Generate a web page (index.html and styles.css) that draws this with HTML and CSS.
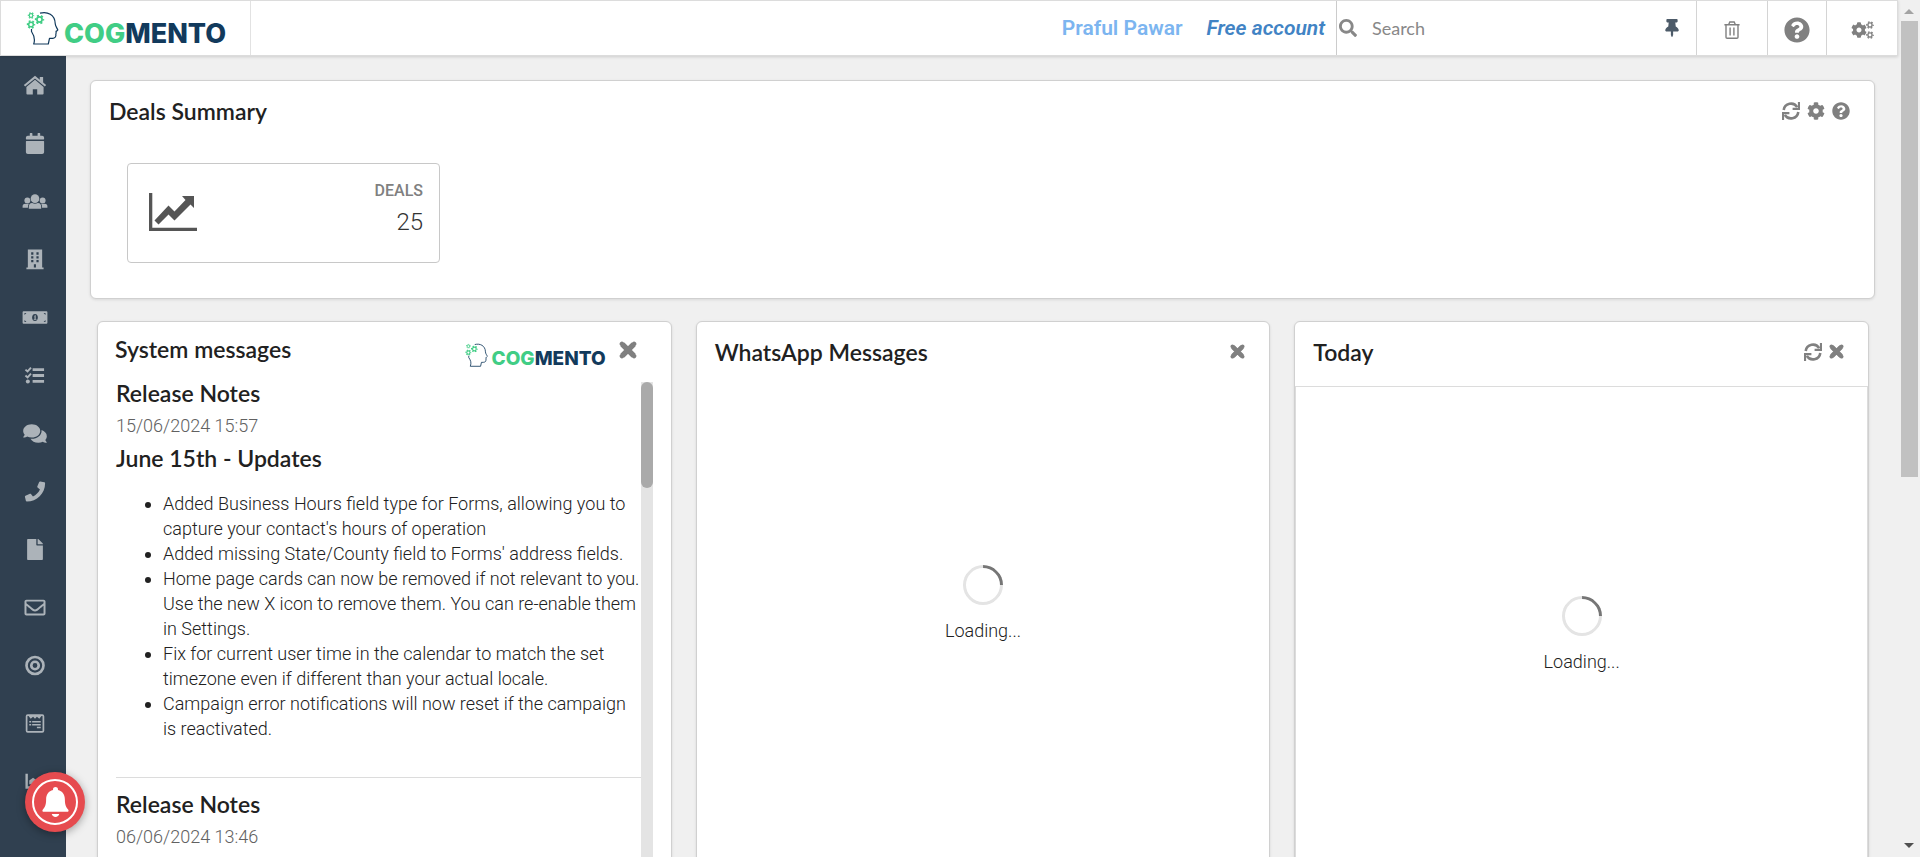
FILE: index.html
```html
<!DOCTYPE html>
<html lang="en">
<head>
<meta charset="utf-8">
<title>Cogmento CRM</title>
<link rel="stylesheet" href="styles.css">
</head>
<body>
<svg class="defs" aria-hidden="true">
  <symbol id="cog" viewBox="0 0 512 512"><path fill-rule="evenodd" d="M487.4 315.7l-42.6-24.6c4.3-23.2 4.3-47 0-70.2l42.6-24.6c4.9-2.8 7.1-8.6 5.5-14-11.1-35.6-30-67.8-54.7-94.6-3.8-4.1-10-5.1-14.8-2.3L380.8 110c-17.9-15.4-38.5-27.3-60.8-35.1V25.8c0-5.6-3.9-10.5-9.4-11.7-36.7-8.2-74.3-7.8-109.2 0-5.5 1.2-9.4 6.1-9.4 11.7V75c-22.2 7.9-42.8 19.8-60.8 35.1L88.7 85.5c-4.9-2.8-11-1.9-14.8 2.3-24.7 26.7-43.6 58.9-54.7 94.6-1.7 5.4.6 11.2 5.5 14L67.3 221c-4.3 23.2-4.3 47 0 70.2l-42.6 24.6c-4.9 2.8-7.1 8.6-5.5 14 11.1 35.6 30 67.8 54.7 94.6 3.8 4.1 10 5.1 14.8 2.3l42.6-24.6c17.9 15.4 38.5 27.3 60.8 35.1v49.2c0 5.6 3.9 10.5 9.4 11.7 36.7 8.2 74.3 7.8 109.2 0 5.5-1.2 9.4-6.1 9.4-11.7v-49.2c22.2-7.9 42.8-19.8 60.8-35.1l42.6 24.6c4.9 2.8 11 1.9 14.8-2.3 24.7-26.7 43.6-58.9 54.7-94.6 1.5-5.5-.7-11.3-5.6-14.1zM256 336c-44.1 0-80-35.9-80-80s35.9-80 80-80 80 35.9 80 80-35.9 80-80 80z"/></symbol>
  <symbol id="gear-ring" viewBox="0 0 20 20"><circle cx="10" cy="10" r="5.2" fill="none" stroke="currentColor" stroke-width="3.4"/><circle cx="10" cy="10" r="8" fill="none" stroke="currentColor" stroke-width="3.4" stroke-dasharray="4.2 4.18" stroke-dashoffset="2.1"/></symbol>
  <symbol id="question" viewBox="0 0 512 512"><path d="M504 256c0 136.997-111.043 248-248 248S8 392.997 8 256C8 119.083 119.043 8 256 8s248 111.083 248 248zM262.655 90c-54.497 0-89.255 22.957-116.549 63.758-3.536 5.286-2.353 12.415 2.715 16.258l34.699 26.31c5.205 3.947 12.621 3.008 16.665-2.122 17.864-22.658 30.113-35.797 57.303-35.797 20.429 0 45.698 13.148 45.698 32.958 0 14.976-12.363 22.667-32.534 33.976C247.128 238.528 216 254.941 216 296v4c0 6.627 5.373 12 12 12h56c6.627 0 12-5.373 12-12v-1.333c0-28.462 83.186-29.647 83.186-106.667 0-58.002-60.165-102-116.531-102zM256 338c-25.365 0-46 20.635-46 46 0 25.364 20.635 46 46 46s46-20.636 46-46c0-25.364-20.635-46-46-46z"/></symbol>
  <symbol id="refresh" viewBox="0 0 18 18"><g fill="none" stroke="currentColor" stroke-width="2.6"><path d="M1.7 8A7.3 7.3 0 0 1 15.2 5.2"/><path d="M16.3 10A7.3 7.3 0 0 1 2.8 12.8"/><path d="M17 0V6.9H10.6M1 18V11.1H7.4" stroke-width="2.2"/></g></symbol>
  <symbol id="times" viewBox="0 0 16 16"><path d="M3 3L13 13M13 3L3 13" stroke="currentColor" stroke-width="5" stroke-linecap="butt"/><path d="M2.6 2.6L13.4 13.4M13.4 2.6L2.6 13.4" stroke="currentColor" stroke-width="4" stroke-linecap="round"/></symbol>
  <symbol id="head" viewBox="0 0 32 34">
    <g fill="none" stroke="#123a5c" stroke-width="1.2" stroke-linejoin="round"><path d="M13.5 2.2C21 .2 28.400 3.700 28.700 12.500C28.600 15 30.800 17.200 31.300 19C31.200 20 29.400 19.700 29.500 20.800C30 22 29 23 29.400 24.500C29.300 27 27 27.600 23 27.400L21.800 33H7.200C9 28 8 25 5 20.500V18"/></g>
    <g color="#41cd85"><use href="#gear-ring" x="1" y="1" width="7" height="7"/><use href="#gear-ring" x="8" y="3.500" width="10" height="10"/><use href="#gear-ring" x="0" y="9" width="9" height="9"/></g>
  </symbol>
</svg>

<header class="topbar">
  <a class="brand" href="#"><svg class="brand-head"><use href="#head"/></svg><span class="brand-name">COG<b>MENTO</b></span></a>
  <div class="account"><span class="user">Praful Pawar</span><a class="plan" href="#">Free account</a></div>
  <div class="search">
    <svg class="i18" viewBox="0 0 512 512"><path d="M505 442.7L405.3 343c-4.500-4.500-10.600-7-17-7H372c27.600-35.300 44-79.700 44-128C416 93.100 322.900 0 208 0S0 93.100 0 208s93.100 208 208 208c48.300 0 92.700-16.400 128-44v16.300c0 6.400 2.500 12.500 7 17l99.700 99.700c9.400 9.400 24.600 9.400 33.900 0l28.300-28.300c9.400-9.400 9.400-24.600.1-34zM208 336c-70.700 0-128-57.200-128-128 0-70.700 57.200-128 128-128 70.700 0 128 57.200 128 128 0 70.700-57.200 128-128 128z"/></svg>
    <input type="text" placeholder="Search" aria-label="Search">
    <button class="pin" aria-label="Pin"><svg viewBox="0 0 384 512"><path d="M298 214L286 96H328c13 0 24-11 24-24V24c0-13-11-24-24-24H56C43 0 32 11 32 24v48c0 13 11 24 24 24h42L86 214C37 237 0 277 0 328c0 13 11 24 24 24h136v104l24 56h16l24-56V352h136c13 0 24-11 24-24 0-51-38-91-86-114z"/></svg></button>
  </div>
  <button class="tool trash" aria-label="Trash"><svg viewBox="0 0 16 18"><g fill="none" stroke="currentColor" stroke-width="1.400"><path d="M.4 3.700H15.600M4.700 3.500L5.800 1H10.200L11.300 3.500M2 4V16.200Q2 17.300 3.100 17.300H12.900Q14 17.300 14 16.200V4M6.100 6.500V14.500M9.900 6.500V14.500"/></g></svg></button>
  <button class="tool help" aria-label="Help"><svg><use href="#question"/></svg></button>
  <button class="tool settings" aria-label="Settings"><svg viewBox="0 0 23 18"><use href="#cog" x="0" y="1" width="16" height="16"/><use href="#gear-ring" x="15" y="0" width="8" height="8"/><use href="#gear-ring" x="15" y="10" width="8" height="8"/></svg></button>
</header>

<div class="shell">
  <nav class="sidebar" aria-label="Main">
    <a href="#" aria-label="Home"><svg viewBox="0 0 26 22"><path d="M13 5L22 12.500V19.500Q22 20.500 21 20.500H15.300V15H10.700V20.500H5Q4 20.500 4 19.500V12.500Z"/><path d="M2 11.300L13 2.200L24 11.300" fill="none" stroke="currentColor" stroke-width="2.200"/><path d="M18 2H21.500V9L18 6Z"/></svg></a>
    <a href="#" aria-label="Calendar"><svg viewBox="-96 0 640 512"><path d="M12 192h424c6.600 0 12 5.400 12 12v260c0 26.500-21.500 48-48 48H48c-26.500 0-48-21.500-48-48V204c0-6.600 5.400-12 12-12zm436-44v-36c0-26.500-21.500-48-48-48h-48V12c0-6.600-5.400-12-12-12h-40c-6.600 0-12 5.400-12 12v52H160V12c0-6.600-5.400-12-12-12h-40c-6.600 0-12 5.400-12 12v52H48C21.500 64 0 85.500 0 112v36c0 6.600 5.400 12 12 12h424c6.600 0 12-5.400 12-12z"/></svg></a>
    <a href="#" aria-label="Contacts"><svg viewBox="0 0 26 22"><circle cx="13" cy="8" r="4.500"/><circle cx="5" cy="10" r="3.100"/><circle cx="21" cy="10" r="3.100"/><path d="M6.500 18.500V16.500Q6.500 12.500 10 12.500Q13 14 16 12.500Q19.500 12.500 19.500 16.500V18.500Z"/><path d="M0 17.500V16Q0 13.300 2.800 13.300Q4.500 14 6.500 13.400Q5.500 15 5.600 17.500ZM26 17.500V16Q26 13.300 23.200 13.300Q21.500 14 19.500 13.400Q20.500 15 20.400 17.500Z"/></svg></a>
    <a href="#" aria-label="Companies"><svg viewBox="0 0 26 22"><path fill-rule="evenodd" d="M5.500 .5H20.500V19.500H22V21.300H4V19.500H5.500ZM9 3.500V6H11.300V3.500ZM14.500 3.500V6H16.800V3.500ZM9 7.500V10H11.300V7.500ZM14.500 7.500V10H16.800V7.500ZM9 11.500V13.800H11.300V11.500ZM14.500 11.500V13.800H16.800V11.500ZM11.800 16V19.500H14V16Z"/></svg></a>
    <a href="#" aria-label="Deals"><svg viewBox="0 0 26 22"><path fill-rule="evenodd" d="M1 4.500H25Q26 4.500 26 5.500V16.500Q26 17.500 25 17.500H1Q0 17.500 0 16.500V5.500Q0 4.500 1 4.500ZM13 7.300C9 7.300 9 14.700 13 14.700S17 7.300 13 7.300ZM2 6.300V8.300L4 6.300ZM24 6.300V8.300L22 6.300ZM2 15.700V13.700L4 15.700ZM24 15.700V13.700L22 15.700Z"/><path d="M12 9.300L13.700 8.500V12.500H14.500V13.400H11.700V12.500H12.500V10Z"/></svg></a>
    <a href="#" aria-label="Tasks"><svg viewBox="0 0 26 22"><path d="M10.500 3.300H22.500V6.300H10.500ZM10.500 9.500H22.500V12.500H10.500ZM10.500 15.700H22.500V18.700H10.500Z"/><circle cx="5.500" cy="17.200" r="2.100"/><path d="M3 4.800L5.200 6.800L8.800 2.800M3 11L5.200 13L8.800 9" fill="none" stroke="currentColor" stroke-width="2"/></svg></a>
    <a href="#" aria-label="Conversations"><svg viewBox="0 0 576 512"><path d="M416 192c0-88.400-93.100-160-208-160S0 103.600 0 192c0 34.300 14.100 65.900 38 92-13.400 30.200-35.500 54.200-35.800 54.500-2.200 2.300-2.800 5.700-1.500 8.700S4.800 352 8 352c36.600 0 66.900-12.300 88.700-25 32.200 15.700 70.300 25 111.300 25 114.900 0 208-71.600 208-160zm122 220c23.900-26 38-57.700 38-92 0-66.900-53.500-124.200-129.300-148.100.9 6.600 1.300 13.300 1.300 20.100 0 105.900-107.700 192-240 192-10.800 0-21.300-.8-31.700-1.900C207.800 439.600 281.800 480 368 480c41 0 79.100-9.200 111.300-25 21.800 12.700 52.100 25 88.700 25 3.200 0 6.100-1.900 7.300-4.800 1.300-2.900.7-6.300-1.500-8.700-.3-.3-22.400-24.200-35.800-54.500z"/></svg></a>
    <a href="#" aria-label="Calls"><svg viewBox="-10 -10 532 532"><path d="M493.400 24.600l-104-24c-11.300-2.600-22.900 3.300-27.500 13.900l-48 112c-4.200 9.800-1.400 21.300 6.900 28l60.600 49.600c-36 76.700-98.900 140.500-177.200 177.200l-49.600-60.600c-6.800-8.300-18.200-11.100-28-6.900l-112 48C3.900 366.500-2 378.100.6 389.400l24 104C27.100 504.200 36.700 512 48 512c256.100 0 464-207.500 464-464 0-11.200-7.700-20.900-18.600-23.400z"/></svg></a>
    <a href="#" aria-label="Documents"><svg viewBox="0 0 384 512"><path d="M224 136V0H24C10.700 0 0 10.700 0 24v464c0 13.300 10.700 24 24 24h336c13.300 0 24-10.700 24-24V160H248c-13.200 0-24-10.800-24-24zm160-14.100v6.100H256V0h6.100c6.400 0 12.500 2.500 17 7l97.900 98c4.500 4.500 7 10.600 7 16.900z"/></svg></a>
    <a href="#" aria-label="Email"><svg viewBox="0 0 512 512"><path d="M464 64H48C21.490 64 0 85.490 0 112v288c0 26.510 21.490 48 48 48h416c26.510 0 48-21.490 48-48V112c0-26.510-21.490-48-48-48zm0 48v40.805c-22.422 18.259-58.168 46.651-134.587 106.490-16.841 13.247-50.201 45.072-73.413 44.701-23.208.375-56.579-31.459-73.413-44.701C106.180 199.465 70.425 171.067 48 152.805V112h416zM48 400V214.398c22.914 18.251 55.409 43.862 104.938 82.646 21.857 17.205 60.134 55.186 103.062 54.955 42.717.231 80.509-37.199 103.053-54.947 49.528-38.783 82.032-64.401 104.947-82.653V400H48z"/></svg></a>
    <a href="#" aria-label="Campaigns"><svg viewBox="0 0 22 22"><g fill="none" stroke="currentColor" stroke-width="2.800"><circle cx="11" cy="11" r="8.900"/><circle cx="11" cy="11" r="3.900"/></g></svg></a>
    <a href="#" aria-label="Forms"><svg viewBox="0 0 22 22"><rect x="2.200" y="2.200" width="17.600" height="17.600" rx="1.200" fill="none" stroke="currentColor" stroke-width="1.800"/><path d="M4 3L6.500 6L9 4L11 6L13 4L15.500 6L18 3ZM5 8.300H7V10H5ZM8 8.300H17V10H8ZM5 11.400H7V13H5ZM8 11.400H17V13H8ZM13 14.500H17V16H13Z"/></svg></a>
    <a href="#" aria-label="Reports"><svg viewBox="0 0 22 22"><path d="M1 3H3.500V16H21V18.500H1Z"/><path d="M5 14V10L9 7L13 10L19 4V14Z"/></svg></a>
  </nav>

  <main class="content">
    <section class="card deals">
      <div class="card-head"><h2>Deals Summary</h2><div class="tools">
        <button aria-label="Refresh"><svg class="i18"><use href="#refresh"/></svg></button><button aria-label="Configure"><svg class="i18"><use href="#cog"/></svg></button><button aria-label="Help"><svg class="i18"><use href="#question"/></svg></button></div></div>
      <div class="stat">
        <svg class="chart" viewBox="0 0 48 38"><path d="M0 0H3.300V34.700H48V38H0Z"/><path d="M33 3H45V15L41.500 11.500L25.500 27.500L19.500 21.500L9.500 31.500L5.500 27.500L19.500 12.500L25.500 18.500L36.500 7Z"/></svg>
        <div class="stat-text"><span class="stat-label">DEALS</span><span class="stat-value">25</span></div>
      </div>
    </section>

    <div class="cards">
      <section class="card system">
        <div class="system-head"><h2>System messages</h2><span class="brand small"><svg class="brand-head"><use href="#head"/></svg><span class="brand-name">COG<b>MENTO</b></span></span><button class="close" aria-label="Close"><svg><use href="#times"/></svg></button></div>
        <div class="messages">
          <div class="feed">
            <article>
              <h3>Release Notes</h3>
              <time>15/06/2024 15:57</time>
              <h3>June 15th - Updates</h3>
              <ul>
                <li>Added Business Hours field type for Forms, allowing you to capture your contact's hours of operation</li>
                <li>Added missing State/County field to Forms' address fields.</li>
                <li>Home page cards can now be removed if not relevant to you. Use the new X icon to remove them. You can re-enable them in Settings.</li>
                <li>Fix for current user time in the calendar to match the set timezone even if different than your actual locale.</li>
                <li>Campaign error notifications will now reset if the campaign is reactivated.</li>
              </ul>
            </article>
            <article>
              <h3>Release Notes</h3>
              <time>06/06/2024 13:46</time>
            </article>
          </div>
          <div class="feed-track"><div class="feed-thumb"></div></div>
        </div>
      </section>

      <section class="card">
        <div class="card-head"><h2>WhatsApp Messages</h2><div class="tools"><button aria-label="Close"><svg class="i14"><use href="#times"/></svg></button></div></div>
        <div class="loader"><div class="spinner"></div>Loading...</div>
      </section>

      <section class="card today">
        <div class="card-head"><h2>Today</h2><div class="tools"><button aria-label="Refresh"><svg class="i18"><use href="#refresh"/></svg></button><button aria-label="Close"><svg class="i14"><use href="#times"/></svg></button></div></div>
        <div class="loader"><div class="spinner"></div>Loading...</div>
      </section>
    </div>
  </main>
</div>

<div class="scrollbar" aria-hidden="true"><i class="up"></i><div class="thumb"></div><i class="down"></i></div>
<button class="bell" aria-label="Notifications"><svg viewBox="0 0 448 512"><path d="M224 512c35.320 0 56-20 63.970-50H160.030c8 30 28.650 50 63.970 50zm215.390-129.710c-19.320-20.760-55.470-51.990-55.470-174.290 0-77.700-44.480-139.900-117.940-155.160V32c0-17.670-20.320-32-41.980-32s-41.980 14.330-41.980 32v20.840C108.560 68.100 64.080 130.300 64.080 208c0 122.300-36.150 153.530-55.470 174.290C-6 398 0 424 22 424h404c22 0 28-26 13.390-41.710z"/></svg></button>
</body>
</html>
```
FILE: styles.css
```css
* { box-sizing: border-box; }
body {
  margin: 0;
  height: 100vh;
  overflow: hidden;
  display: grid;
  grid-template: auto minmax(0, 1fr) / minmax(0, 1fr) 22px;
  background: #f0f0f0;
  color: #212121;
  font: 300 18px/25px Roboto, "Liberation Sans", sans-serif;
}
svg { display: block; fill: currentColor; overflow: visible; }
button { border: 0; padding: 0; margin: 0; background: none; color: inherit; font: inherit; }
h2, h3 { margin: 0; font: 600 23px/24px "Lato Semibold", Lato, "Liberation Sans", sans-serif; color: #212121; }
h3 { line-height: 22px; }
a { color: inherit; text-decoration: none; }
.defs { position: absolute; width: 0; height: 0; }
.i18 { width: 18px; height: 18px; }
.i14 { width: 15px; height: 15px; }

.topbar {
  display: flex;
  height: 56px;
  background: #fff;
  border: 1px solid #dcdcdc;
  box-shadow: 0 1px 3px rgba(0, 0, 0, .15);
  z-index: 1;
}
.brand { display: flex; align-items: flex-start; width: 250px; padding: 10px 0 0 25px; border-right: 1px solid #e2e2e2; }
.brand-head { width: 33px; height: 34px; }
.brand-name { margin-left: 5px; padding-top: 7px; font: 800 27px/32px Inter, "Open Sans", sans-serif; color: #41cd85; }
.brand-name b { font-weight: 800; color: #123a5c; }
.account { flex: 1; display: flex; justify-content: flex-end; align-items: center; gap: 24px; padding-right: 11px; font-size: 21px; font-weight: 600; color: #7cb5f0; }
.plan { font-style: italic; color: #4183c4; }
.search { display: flex; align-items: center; width: 360px; padding: 0 17px 0 2px; border-left: 1px solid #ccc; color: #888; }
.search input { flex: 1; min-width: 0; margin: 0; padding: 0 0 0 15px; border: 0; outline: 0; background: none; font: 18px/24px Lato, sans-serif; }
.search input::placeholder { color: #888; }
.pin { color: #4d5b69; }
.pin svg { width: 14px; height: 18px; }
.tool { display: flex; align-items: center; justify-content: center; border-left: 1px solid #d4d4d4; color: #808080; padding-top: 4px; }
.trash { width: 71px; }
.trash svg { width: 16px; height: 18px; }
.help { width: 59px; }
.help svg { width: 26px; height: 26px; }
.settings { width: 71px; }
.settings svg { width: 23px; height: 18px; }

.shell { grid-column: 1; display: flex; min-height: 0; }
.sidebar { width: 66px; background: #304050; color: #acb3b9; padding-left: 4px; display: flex; flex-direction: column; overflow: hidden; }
.sidebar a { flex: none; height: 58px; display: flex; align-items: center; justify-content: center; }
.sidebar svg { width: 26px; height: 21px; }

.content { flex: 1; min-width: 0; padding: 24px 23px 0 24px; overflow: hidden; }
.card { background: #fff; border: 1px solid #d0d0d0; border-radius: 6px; box-shadow: 0 1px 3px rgba(0, 0, 0, .1); }
.deals { height: 219px; }
.card-head { display: flex; justify-content: space-between; align-items: flex-start; padding: 18px 24px 22px 18px; }
.tools { display: flex; align-items: center; gap: 7px; height: 23px; color: #808080; }
.stat { display: flex; justify-content: space-between; align-items: flex-start; width: 313px; height: 100px; margin: 18px 0 0 36px; padding: 16px; border: 1px solid #c8c8c8; border-radius: 4px; }
.chart { width: 48px; height: 38px; margin: 13px 0 0 5px; color: #555; }
.stat-text { display: flex; flex-direction: column; align-items: flex-end; }
.stat-label { font-size: 16px; line-height: 22px; font-weight: 500; color: #808080; }
.stat-value { font-size: 24px; line-height: 40px; color: #333; }

.cards { display: grid; grid-template-columns: repeat(3, minmax(0, 1fr)); gap: 24px; padding: 22px 6px 0 7px; }
.cards .card { height: 700px; }
.system-head { display: flex; align-items: flex-start; padding: 15px 34px 0 17px; }
.system-head h2 { flex: 1; }
.small { width: auto; padding: 6px 0 0; border: 0; }
.small .brand-head { width: 23px; height: 24px; }
.small .brand-name { margin-left: 4px; padding-top: 4px; font-size: 19px; line-height: 24px; }
.close { color: #808080; margin: 4px 0 0 13px; }
.close svg { width: 18px; height: 18px; }
.messages { display: flex; height: 620px; padding: 4px 18px 0 18px; margin-top: 7px; }
.feed { flex: 1; min-width: 0; }
.feed-track { width: 12px; background: #e4e4e4; }
.feed-thumb { height: 106px; background: #aaa; border-radius: 6px; }
article { border-bottom: 1px solid #dcdcdc; padding-bottom: 36px; margin-bottom: 15px; }
time { display: block; margin: 9px 0; color: #616161; }
ul { margin: 22px 0 0; padding: 0 0 0 47px; }
.loader { display: flex; flex-direction: column; align-items: center; gap: 13px; padding-top: 179px; color: #212121; }
.spinner { width: 40px; height: 40px; border: 3px solid #e4e4e4; border-top-color: #767676; border-radius: 50%; transform: rotate(45deg); }
.today .loader { height: 640px; border: 1px solid #dcdcdc; padding-top: 209px; }

.scrollbar { grid-area: 1 / 2 / 3 / 3; display: flex; flex-direction: column; align-items: center; padding: 9px 0; }
.thumb { width: 17px; height: 456px; margin-top: 7px; background: #c1c1c1; }
.up, .down { border: 5px solid transparent; }
.up { border-top: 0; border-bottom-color: #a3a3a3; }
.down { margin-top: auto; border-bottom: 0; border-top-color: #505050; }

.bell { position: fixed; left: 25px; bottom: 25px; width: 60px; height: 60px; display: flex; align-items: center; justify-content: center; border-radius: 50%; background: #e64b4f; color: #fff; box-shadow: 0 2px 8px rgba(0, 0, 0, .35); z-index: 2; }
.bell::before { content: ""; position: absolute; inset: 7px; border: 2px solid #fff; border-radius: 50%; }
.bell svg { width: 29px; height: 30px; }
```
